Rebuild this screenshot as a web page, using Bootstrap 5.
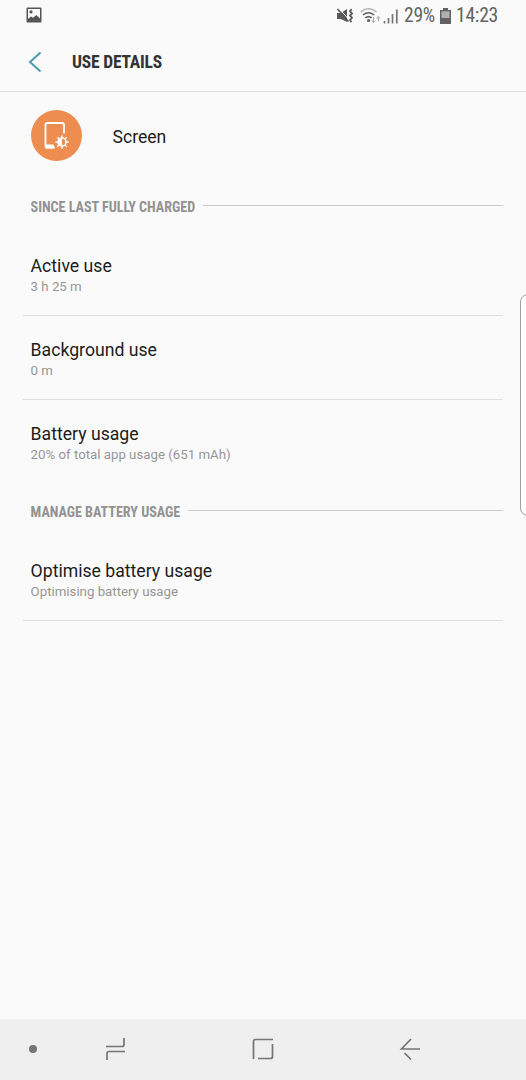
<!DOCTYPE html>
<html lang="en">
<head>
<meta charset="utf-8">
<meta name="viewport" content="width=device-width, initial-scale=1">
<title>Use details</title>
<link href="https://cdn.jsdelivr.net/npm/bootstrap@5.3.0/dist/css/bootstrap.min.css" rel="stylesheet">
<style>
body{background:#fafafa;color:#1c1c1c;font-family:Roboto,"Liberation Sans",sans-serif;height:1080px;overflow:hidden}
svg{display:block;flex:none}
.cond{font-family:"Roboto Condensed",Roboto,sans-serif;font-stretch:75%;white-space:nowrap}
.status{height:32px;padding:0 28px 0 26px;color:#626262;font-size:19.6px;letter-spacing:-.25px;line-height:32px}
.status .pic{margin-top:-2px}
.status .vib{margin-right:6px}
.status .wifi{margin-right:2px}
.status .pct{margin:0 5px 0 5px}
.status .batt{margin-top:-1px}
.status .clock{margin:0 0 0 5px}
.appbar{height:60px;border-bottom:1px solid #e0e0e0;padding-left:28px}
.appbar h1{font-size:17.5px;letter-spacing:-.2px;font-weight:700;color:#333;margin:1px 0 0 30px;line-height:20px}
.apphead{height:87px;padding-left:30.500px}
.apphead span{font-size:17.6px;margin-left:31px;line-height:22px;padding-top:2px}
.sect{height:53px;padding:0 23px 0 30.600px;gap:8px}
.sect h2{font-size:14.100px;letter-spacing:-.02px;font-weight:700;color:#929292;margin:2px 0 0;line-height:18px}
.sect i{flex:1;height:1.500px;background:#cbcbcb;margin-top:0}
.entries{padding:0 23px;border-radius:0}
.entry.list-group-item{height:84px;padding:23px 7.600px 0;background:transparent;border:0;border-bottom:1px solid #e0e0e0;border-radius:0;color:#1c1c1c}
.entry.open-end{border-bottom-color:transparent}
.entry .ttl{font-size:17.65px;line-height:22px}
.entry .sub{font-size:13.25px;line-height:19px;color:#969696}
.edge{right:-12px;top:294px;width:18px;height:222px;border:1px solid #a0a0a0;border-radius:8px;background:#fff}
.softkeys{height:61px;background:#efefef;padding:0 106px 2px 29px}
.keys{margin-left:67px}
</style>
</head>
<body class="d-flex flex-column position-relative">
<div class="status d-flex align-items-center">
  <svg class="pic" width="16" height="16" viewBox="0 0 16 16"><path fill="#555" fill-rule="evenodd" d="M1.500.500h13a1 1 0 0 1 1 1v13a1 1 0 0 1-1 1h-13a1 1 0 0 1-1-1v-13a1 1 0 0 1 1-1zM2 2v10l3-2.500 2 1.300L10.500 8 14 11.500V2zM5 3.300a1.600 1.600 0 1 1 0 3.200 1.600 1.600 0 0 1 0-3.200z"/></svg>
  <svg class="vib ms-auto" width="18" height="18" viewBox="0 0 18 18"><path fill="#595959" d="M1 6h4l6-4v13L5 12H1z"/><path d="M2.500 1l10 11" stroke="#fafafa" stroke-width="1"/><path d="M1.500 2l11 12.500" stroke="#595959" stroke-width="1.600"/><path d="M15.500 2l-1.500 2.200 2 2.200-2 2.200 2 2.200-2 2.200 1.500 2.200" fill="none" stroke="#595959" stroke-width="1.800"/></svg>
  <svg class="wifi" width="21" height="18" viewBox="0 0 21 18"><g fill="none" stroke-width="1.600"><path d="M.5 5Q8.500-1.500 16.500 5" stroke="#b5b5b5"/><path d="M3 8q5.500-4.500 11 0M5.300 11q3.200-2.700 6.400 0" stroke="#606060"/></g><circle cx="8.500" cy="13.500" r="1.600" fill="#606060"/><path d="M13.500 10v5.500m-1.700-2l1.700 2 1.700-2M18.300 14.500v-5m-1.700 2l1.700-2 1.700 2" fill="none" stroke="#aaa"/></svg>
  <svg width="16" height="17" viewBox="0 0 16 17"><path d="M1.500 13v2.500M5.500 10v5.500M9.500 6v9.500M13.800 1.500v14" stroke="#747474" stroke-width="1.700"/></svg>
  <span class="cond pct">29%</span>
  <svg class="batt" width="11" height="16" viewBox="0 0 11 16"><path d="M3 0h5v2h3v14H0V2h3z" fill="#626262"/><path d="M1.500 3.300h8V10h-8z" fill="#b0b0b0"/></svg>
  <span class="cond clock">14:23</span>
</div>
<header class="appbar d-flex align-items-center">
  <svg width="14" height="22" viewBox="0 0 14 22"><path d="M12.500 1.500L2 11l10.500 9.500" fill="none" stroke="#4a9aae" stroke-width="2"/></svg>
  <h1 class="cond">USE DETAILS</h1>
</header>
<div class="apphead d-flex align-items-center">
  <svg width="51" height="51" viewBox="0 0 51 51"><circle cx="25.500" cy="25.500" r="25.500" fill="#ed8e50"/><path d="M22 37.700H16.500a2 2 0 0 1-2-2V15a2 2 0 0 1 2-2h14.500a2 2 0 0 1 2 2v8.500" fill="none" stroke="#fff" stroke-width="1.800"/><path d="M14.500 34.500h8l1.500 4h-9.500z" fill="#fff"/><path d="M31 25.300v13.400M24.300 32h13.400M26.300 27.300l9.400 9.400M35.700 27.300l-9.400 9.400" stroke="#fff" stroke-width="1.500"/><circle cx="31" cy="32" r="4" fill="#ed8e50" stroke="#fff" stroke-width="1.500"/><path d="M31 28a4 4 0 0 0 0 8z" fill="#fff"/></svg>
  <span>Screen</span>
</div>
<div class="sect d-flex align-items-center"><h2 class="cond">SINCE LAST FULLY CHARGED</h2><i></i></div>
<div class="entries list-group">
  <div class="entry list-group-item"><div class="ttl">Active use</div><div class="sub">3 h 25 m</div></div>
  <div class="entry list-group-item"><div class="ttl">Background use</div><div class="sub">0 m</div></div>
  <div class="entry list-group-item open-end"><div class="ttl">Battery usage</div><div class="sub">20% of total app usage (651 mAh)</div></div>
</div>
<div class="sect d-flex align-items-center"><h2 class="cond">MANAGE BATTERY USAGE</h2><i></i></div>
<div class="entries list-group">
  <div class="entry list-group-item"><div class="ttl">Optimise battery usage</div><div class="sub">Optimising battery usage</div></div>
</div>
<div class="edge position-absolute"></div>
<nav class="softkeys d-flex align-items-center mt-auto">
  <svg width="8" height="8" viewBox="0 0 8 8"><circle cx="4" cy="4" r="4" fill="#757575"/></svg>
  <div class="keys d-flex flex-fill align-items-center justify-content-between">
  <svg width="22" height="24" viewBox="0 0 22 24"><path d="M2 9.500h16q2 0 2-2V1M21 14.500H5q-2 0-2 2V23" fill="none" stroke="#757575" stroke-width="1.700"/></svg>
  <svg width="22" height="22" viewBox="0 0 22 22"><path d="M1.500 21V3.500q0-2 2-2H21M20.500 6v12.500q0 2-2 2H6" fill="none" stroke="#757575" stroke-width="1.700"/></svg>
  <svg width="21" height="22" viewBox="0 0 21 22"><path d="M21 11H2.500L12 1M5.500 15l6.500 6.500" fill="none" stroke="#757575" stroke-width="1.700"/></svg>
  </div>
</nav>
<script src="https://cdn.jsdelivr.net/npm/bootstrap@5.3.0/dist/js/bootstrap.bundle.min.js"></script>
</body>
</html>
